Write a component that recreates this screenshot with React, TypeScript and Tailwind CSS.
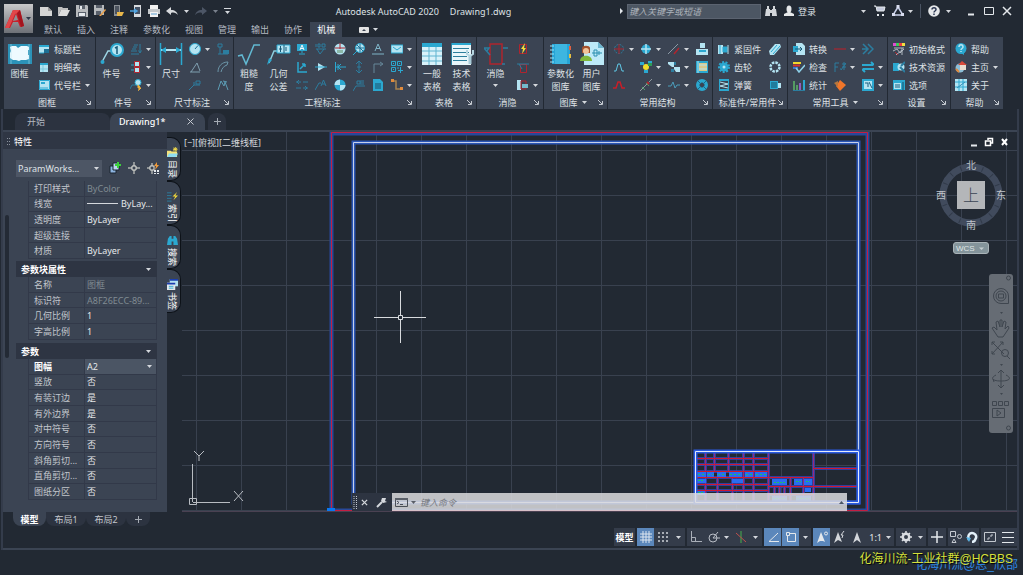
import type { ReactNode } from "react";
import clsx from "clsx";

const C = "#2ba8d0";
const L = "#b4e4f2";
const D = "#2c7d9f";
const R = "#b0242e";
const W = "#e4e8ec";

// 12 x 12 artwork for the small tool buttons
const icons: Record<string, ReactNode> = {
  titleBlock: <><rect x="1" y="2" width="10" height="8" fill={L} /><path d="M1 2h10v2H1z" fill={C} /><path d="M6 6h5v4H6z" fill="#1c6f94" /><path d="M1 10h5" stroke={C} /></>,
  partsList: <><rect x="2" y="2" width="8" height="9" fill={L} /><path d="M2 2h8v2H2z" fill={C} /><path d="M5 4v7M2 8h8" stroke="#7cc9de" /></>,
  codeBlock: <><rect x="1" y="1" width="11" height="10" fill={L} /><path d="M1.500 1.500h10v9h-10z" stroke={C} fill="none" /><path d="M3 3h4v2H3z" fill={C} /><path d="M2 9h8" stroke={C} /></>,
  balloonList: <path d="M4 2h4M3 4h4M2 6h4M1 8h6M1 11h8M10 1v8M8.500 7.500L10 10l1.500-2.500" stroke={D} fill="none" />,
  balloonSwap: <><path d="M4.500 0.500h5v5h-5zM4.500 6.500h5v5h-5z" fill={L} stroke={R} /><path d="M1 4h3M1 9h3" stroke={C} /></>,
  balloonBolt: <><path d="M0 10l2-4h4" stroke={D} fill="none" /><circle cx="8" cy="3.500" r="3" fill={L} stroke={C} /><path d="M8 6l2 2-1.500 3.500L11 9H8z" stroke="#f0b23c" fill="#f0b23c" /></>,
  radius: <><circle cx="6" cy="6" r="5.500" fill={L} stroke={C} /><path d="M6 6l3-3.500" stroke="#1c6f94" /></>,
  angle: <path d="M1 11h10M2 11L8 2l3 8" stroke="#7f9fb0" fill="none" />,
  leader: <path d="M0 11l5-5h6M7 2h4v3H7zM5 6V3" stroke={D} fill="none" />,
  ordinate: <><path d="M1 1h4v3H1zM3 4v7M1 11h10" stroke={D} fill="none" /><path d="M6 7h6v4H6z" fill={D} /></>,
  arc: <path d="M1 11C1 5 5 1 11 1M4 11C5 7 7 5 10 4L11 1" stroke="#6b95a8" fill="none" />,
  jog: <path d="M1 11L4 2l3 5 1-4 3 8M6 2l4 1" stroke="#5c9db5" fill="none" />,
  datum: <><path d="M1 1h10v7H1z" fill={C} /><path d="M4 7l2-5 2 5M4.500 5.500h3" stroke="#eefaff" fill="none" /><path d="M6 8v2M3 11h6" stroke={C} /></>,
  rough: <path d="M1 6h10M2 6l3 5 4-5M1 1v3M3 1h2v3H3zM7 1h3v3H7z" stroke={D} fill="none" />,
  weldBall: <><circle cx="6" cy="6" r="5.500" fill={L} /><path d="M1 5h10M6 0v6" stroke={R} /><path d="M3 7h6v3H3z" fill="#8bb8a8" /></>,
  target: <><circle cx="7" cy="5" r="4.500" fill={L} stroke={C} /><path d="M7 1v8M3 5h8M4 2l6 6" stroke="#1c6f94" /><path d="M4 8l-4 4" stroke={C} /></>,
  textLine: <path d="M3 8l3-7 3 7M4 5.500h4M0 11h12" stroke="#7fb4c8" fill="none" />,
  tag: <><path d="M0 2h12v8H0z" fill={L} /><path d="M0 2h12v8H0zM2 4l4 3 4-3" stroke={C} fill="none" /></>,
  corner: <path d="M2 1v10h9M4 8l5-5M9 3H6M9 3v3" stroke={C} fill="none" strokeWidth="1.500" />,
  taper: <><path d="M3 2l7 4-7 4z" fill={L} /><path d="M0 6h12" stroke={C} /></>,
  pushLeft: <path d="M1.500 1v10M4 3v6M2 6h10M4 6l3-3M4 6l3 3" stroke={C} fill="none" />,
  updown: <path d="M6 0v12M3 3l3-3 3 3M3 9l3 3 3-3M4 6h4" stroke={D} fill="none" />,
  bend: <path d="M2 12V3h8M8 1l3 2-3 2" stroke="#66879a" fill="none" />,
  qr: <path d="M.5.5h4v4h-4zM6.500.5h4v4h-4zM.5 6.500h4v4h-4zM6 7h2M9.500 6v6M7 9.500h5M2 2.500h1M8 2.500h1M2 8.500h1" stroke={C} fill="none" />,
  swapRows: <path d="M0 3h5M7 3h5M0 9h5M7 9h5M3 1L1 3l2 2M9 7l2 2-2 2" stroke={D} fill="none" />,
  leaderA: <path d="M0 11l4-7h2M6 7l2.500-6L11 7M7 5h3" stroke={D} fill="none" />,
  quad: <><circle cx="6" cy="6" r="5.500" fill={C} /><path d="M6 6V.5A5.500 5.500 0 00.5 6zM6 6v5.500A5.500 5.500 0 0011.500 6z" fill={L} /></>,
  leaderNote: <path d="M0 12l3-5h9M4 2h3v3H4zM8 1v5M10 1v5" stroke={D} fill="none" />,
  note: <><path d="M1 0h7l3 3v9H1z" fill={C} /><path d="M3 5h6M3 7h6M3 9h6" stroke="#1a4e68" /></>,
  route: <><path d="M1 2h4v8h5" stroke="#a88350" fill="none" strokeWidth="1.500" /><path d="M0 0h3v3H0zM9 8h3v3H9z" fill="#e08b3c" /></>,
  hideBolt: <><path d="M2.500 1.500h7v9h-7z" stroke={R} fill="none" /><path d="M8 0L4 6h2l-1 5 4-6H7z" fill="#f5dc3a" /></>,
  hideOff: <><path d="M3.500 3.500h6v8h-6z" stroke={R} fill="none" /><path d="M0 3h12M2 3l3 5" stroke={D} /></>,
  hideEdit: <><path d="M0 1h4v10H0z" fill={L} /><path d="M4 2h5v8H4z" stroke={R} fill="none" /><path d="M5 5h6v4H5z" fill="#76b9cc" /></>,
  holeRed: <><circle cx="6" cy="6" r="4.500" stroke={D} fill="none" strokeDasharray="2 1" /><path d="M1 6h10M6 1v10" stroke={R} /></>,
  hole: <><circle cx="6" cy="6" r="4.500" fill={C} /><path d="M1 6h10M6 1v10" stroke={L} strokeWidth="1.500" /></>,
  lines: <><path d="M0 11L10 1" stroke="#8a98a4" /><path d="M6 11l5-6" stroke={R} strokeWidth="1.500" /></>,
  keyway: <><path d="M0 6h12v6H0zM4 0h5v5H4z" fill={L} /><path d="M3 7h7v2H3z" fill={C} /></>,
  bump: <path d="M1 10h2L5 3h2l2 7h2" stroke="#5fc8e6" fill="none" />,
  bumpRed: <path d="M0 9h3L5 3h2l2 6h3" stroke="#c81e28" fill="none" strokeWidth="1.500" />,
  cluster: <><circle cx="6" cy="6" r="3" fill="#f0dc2a" /><path d="M0 1h4v3H0zM8 0h4v4H8zM4 9h4v3H4z" fill={C} /><path d="M8 2h4v3H8z" fill="#2f9a55" /></>,
  blocks: <><path d="M0 1h6v5H4L0 3zM6 6h6v5H8L6 8z" fill={L} /><path d="M6 1h2v3H6zM3 8h3v3H3z" fill={D} /></>,
  frame: <><path d="M0 0h12v12H0z" fill={C} /><path d="M3 2h8v8H3z" fill="#d9c98c" /><path d="M3 4h8M3 8h8M2 0v12" stroke={L} /></>,
  axis: <><path d="M0 12L12 0" stroke="#8e989e" /><path d="M2 8l3 3M6 4l3 3" stroke="#4aa364" /><path d="M7 3l2 2" stroke={R} strokeWidth="2" /></>,
  wave: <path d="M0 7h3l2-4 2 6 2-3h3" stroke="#4b9dbb" fill="none" />,
  ring: <><circle cx="6" cy="6" r="4.250" stroke={C} strokeWidth="3.500" fill="none" /><path d="M2 2l3 3M10 2L7 5M2 10l3-3M10 10L7 7" stroke="#1b6788" /></>,
  bolt: <><path d="M0 2h5v9H0z" fill={L} /><path d="M2 2v9M5 4h4v5H5z" stroke={C} fill={C} /><path d="M10 2v9" stroke={L} /></>,
  gear: <><circle cx="6" cy="6" r="4.500" fill={C} /><circle cx="6" cy="6" r="5" stroke={C} strokeWidth="2" strokeDasharray="2 1.500" fill="none" /><circle cx="6" cy="6" r="1.500" fill={L} /></>,
  spring: <><path d="M1 1h10M1 11h10" stroke={C} strokeWidth="2" /><path d="M2 3l8 2-8 2 8 2" stroke={L} fill="none" /><path d="M1.500 1v10M10.500 1v10" stroke={C} /></>,
  pin: <><path d="M0 8l6-7h5l1 3-7 8H1z" fill={L} /><path d="M2 9l6-7M4 11l7-8" stroke={C} /></>,
  bearing: <circle cx="6" cy="6" r="4.500" stroke={L} strokeWidth="2.500" strokeDasharray="2.500 1" fill="none" />,
  motor: <><path d="M1 2h8v8H1z" fill={C} /><path d="M2 4h6M2 6h6M2 8h6" stroke="#174f69" /><path d="M9 4h3v5H9z" fill={L} /></>,
  convert: <><path d="M3 0h6l3 3v9H3z" fill={L} /><path d="M0 3h5v6H0z" fill={C} /><path d="M2 6h7M7 4l2 2-2 2" stroke="#175a78" fill="none" /></>,
  check: <><path d="M0 2h8" stroke="#f0d62c" strokeWidth="2" /><path d="M0 4.500h7" stroke="#d23434" strokeWidth="2" /><path d="M0 7h5" stroke="#3a77d0" strokeWidth="2" /><path d="M3 7l3 4 6-7" stroke="#8fd2ea" fill="none" strokeWidth="1.500" /></>,
  stats: <><path d="M1 2v10M4 6v6" stroke="#5db86a" strokeWidth="1.500" /><path d="M7 4v8" stroke="#8e5cc0" strokeWidth="2" /><path d="M11 1v11" stroke={C} strokeWidth="2" /><path d="M0 11.500h12" stroke={D} /></>,
  redLine: <path d="M0 6h12" stroke="#c21f28" />,
  fit: <path d="M1 11V2h4M1 6h3M6 8h1M8 3h4M8 6h4M10 1v8M7 9l5-7" stroke={D} fill="none" />,
  diamond: <><path d="M6 1l6 5-6 6-4-5z" fill="#f0762a" /><path d="M0 4l4-2v6z" fill="#b7763c" /></>,
  chevrons: <path d="M1 1l5 5-5 5M6 1l5 5-5 5M0 6h5" stroke={D} fill="none" strokeWidth="1.500" />,
  swap: <path d="M0 4h11M12 8H1M9 1l3 3M3 11L0 8" stroke={C} strokeWidth="2" fill="none" />,
  catalog: <><path d="M0 0h12v12H0z" fill={C} /><path d="M2 2h8v8H2z" fill={L} /><path d="M3 4h3v4M7 3l3 6" stroke="#1a5f80" fill="none" /></>,
  initFormat: <><path d="M0 0h3v3H0z" fill="#e24bd2" /><path d="M3 0h3v3H3z" fill="#3ad05a" /><path d="M6 0h3v3H6z" fill="#f04040" /><path d="M9 0h3v3H9z" fill="#f0e040" /><path d="M1 5h10M0 8l4-2 3 4 4-4M3 12l6-5M9 5v7" stroke="#b0b8c0" fill="none" /><path d="M2 9l3 3" stroke={R} /></>,
  resource: <><path d="M0 2h6v8H0z" fill={C} /><circle cx="8" cy="6" r="3.500" fill={L} /><path d="M7 6l5 5M8 5l4-4" stroke={D} strokeWidth="2" /></>,
  options: <><path d="M0 1h12v10H0z" fill={C} /><path d="M1 4h7v6H1z" fill={L} /><path d="M2 6h5M2 8h5" stroke="#1a5f80" /><path d="M10 3v8" stroke="#174f69" /></>,
  helpBall: <><circle cx="6" cy="5.500" r="5.500" fill={C} /><path d="M6 10l3 2V9z" fill={C} /><path d="M4 4c0-3 4-3 4 0 0 1.500-2 1.500-2 3M6 8v1" stroke={L} fill="none" strokeWidth="1.500" /></>,
  home: <><circle cx="5" cy="7" r="4.500" fill="#8dbfd8" /><path d="M3 4l4-4 5 4z" fill="#d84a3a" /><path d="M5 4h6v5H5z" fill="#e8ddd0" /><path d="M1 8l3 3" stroke="#e08a3a" strokeWidth="2" /></>,
  about: <><path d="M0 0h12v12H0z" fill={L} /><path d="M0 3h12M0 8h12M4 0v12M8 0v12" stroke={C} /><path d="M2 9l8-6" stroke="#2f8fb8" /></>,
  // quick access
  qNew: <><path d="M0 2h8l4 4v5H0z" fill="#d5d5d5" /><path d="M8 2v4h4" fill="#9c9c9c" /></>,
  qOpen: <><path d="M0 2h4l1 1h5v2H3l-3 6z" fill="#bfbfbf" /><path d="M3 5h9l-3 6H0z" fill="#dedede" /></>,
  qSave: <><path d="M0 0h11l1 1v11H0z" fill="#b7babd" /><path d="M3 0h6v4H3zM2 7h8v5H2z" fill="#59606b" /><path d="M4 1h2v3H4zM3 8h6v3H3z" fill={W} /></>,
  qSaveAs: <><path d="M0 0h10v10H0z" fill="#b7babd" /><path d="M2 0h6v3H2zM2 6h5v4H2z" fill="#59606b" /><path d="M5 11l6-7 1 1-5 6z" fill="#e8a04a" /></>,
  qMobileOpen: <><path d="M2 0h6v11H2z" fill="#8c9196" /><path d="M3 1h4v8H3z" fill="#4d545f" /><path d="M5 7h7l-2 4H5z" fill="#e8b64a" /></>,
  qMobileSave: <><path d="M4 0h7v12H4z" fill="#d7dade" /><path d="M5 2h5v7H5z" fill="#435064" /><path d="M0 6h6M4 4l3 2-3 2" stroke="#4da3e0" fill="none" strokeWidth="1.500" /></>,
  qPrint: <><path d="M2 0h8v4H2z" fill="#f2f2f2" /><path d="M0 4h12v5H0z" fill="#c4c8cb" /><path d="M2 7h8v5H2z" fill="#f2f2f2" /><path d="M3 9h6" stroke="#5a9fd0" /></>,
  qUndo: <path d="M0 6l5-4v3c4 0 6 2 7 5-2-2-4-3-7-2v2z" fill="#d8dadd" />,
  qRedo: <path d="M12 6L7 2v3C3 5 1 7 0 10c2-2 4-3 7-2v2z" fill="#4d5666" />,
  find: <path d="M1 4h4v7H0zM7 4h4l1 7H7zM2 1h2v3H2zM8 1h2v3H8zM5 5h2v3H5z" fill="#d3d6da" />,
  user: <><ellipse cx="6" cy="4" rx="2.500" ry="3.500" fill="#e6e8ea" /><path d="M1 11V9l4-2h2l4 2v2z" fill="#e6e8ea" /></>,
  cart: <><path d="M0 1h2l1 5h7l1-4H3" fill="#c3c9dc" stroke={W} /><path d="M3 9h2v2H3zM8 9h2v2H8z" fill={W} /></>,
  appStore: <><path d="M6 2l5 8H1z" stroke="#c9d0ea" fill="none" strokeWidth="1.500" /><path d="M4.500 0h3v3h-3zM0 8h3v3H0zM9 8h3v3H9z" fill="#d8dcee" /></>,
  help: <><circle cx="6" cy="6" r="5.800" fill="#e6e8ea" /><path d="M4 4.500c0-2.500 4-2.500 4 0 0 1.500-2 1.500-2 3M6 8.500v1.500" stroke="#2a3550" fill="none" strokeWidth="1.500" /></>,
  winMin: <path d="M3 9.500h6" stroke={W} strokeWidth="2" />,
  winMax: <path d="M1.500 2.500h9v7h-9z" stroke={W} fill="none" />,
  winClose: <path d="M2 2l8 8M10 2l-8 8" stroke={W} strokeWidth="1.500" />,
  // palette
  pAdd: <><path d="M1 4h6v7H1z" fill="#8db4e0" stroke="#1a2530" /><path d="M4 1h6v7H4z" fill="#bcd2ee" stroke="#1a2530" /><path d="M9 0v6M6 3h6" stroke="#3bd03b" strokeWidth="2" /></>,
  pPick: <path d="M6 0v4M6 8v4M0 6h4M8 6h4M4 4h4v4H4z" stroke="#e4e4dc" fill="none" />,
  pQuick: <><path d="M5 1v3M5 8v4M0 6h3M3 4h4v4H3z" stroke="#e4e4dc" fill="none" /><path d="M10 0L7 4h2l-1 4 4-5h-2z" fill="#f09a3a" /><path d="M7 8h2v2H7zM10 8h2v2h-2zM7 11h2v1H7zM10 11h2v1h-2z" fill={W} /></>,
  vFolder: <><path d="M0 4h4l1 1h6v6H0z" fill="#f5e27a" /><path d="M2 7h10l-2 4H0z" fill="#8fdcf0" /><path d="M9 0v5M6.500 2.500h5M7 1l4 3M11 1L7 4" stroke="#f8e04a" /></>,
  vIndex: <><path d="M0 2h5M0 5h5M0 8h5M0 11h5" stroke={D} /><path d="M11 1L6 6h3l-2 4 5-5H9z" fill="#f5dc3a" /></>,
  vFind: <path d="M1 4l2-3h2v10H0zM7 1h2l2 3 1 7H7zM5 4h2v3H5z" fill={C} />,
  vBook: <><path d="M3 0h9v8H3z" fill={L} /><path d="M0 4h9v8H0z" fill={W} /><path d="M0 4h9v2H0zM3 0h9v2H3z" fill="#1b3fb0" /><path d="M2 8h5M2 10h5" stroke={C} /></>,
  // status bar, drawn on the same grid
  sGrid: <path d="M3 0v12M6 0v12M9 0v12M0 3h12M0 6h12M0 9h12" stroke="#dde6f0" />,
  sSnap: <path d="M2 1v2M6 1v2M10 1v2M2 5v2M6 5v2M10 5v2M2 9v2M6 9v2M10 9v2" stroke="#cdd1d7" strokeWidth="1.500" />,
  sOrtho: <path d="M1.500 0v10.500H12M1.500 6.500h4v4" stroke="#a9afb8" fill="none" />,
  sPolar: <><circle cx="5" cy="7" r="4" stroke="#b9bec6" fill="none" /><path d="M5 7h7M5 7l5-6" stroke="#b9bec6" /></>,
  sIso: <><path d="M6 0v12" stroke="#47b04c" /><path d="M1 2l10 9" stroke="#c0504d" /></>,
  sTrack: <path d="M11 2L2 10.500h10" stroke={W} fill="none" />,
  sOsnap: <><path d="M2.500 2.500h8v8h-8z" stroke={W} fill="none" /><path d="M1.500 1.500h3v3h-3z" stroke={W} fill="#5b87bb" /></>,
  sAnnoO: <><path d="M5 1l4 10-2-1H4l-3 2zM5 5v3" fill={W} /><circle cx="10" cy="2.500" r="1.500" stroke={W} fill="none" /></>,
  sAnnoBolt: <><path d="M5 1l4 10-4-2-4 3z" fill="#d3d6db" /><path d="M11 0L8 4h2L9 7" stroke="#d3d6db" fill="none" /></>,
  sAnno: <path d="M6 1l4 11-4-3-4 3z" fill="#d3d6db" />,
  sGear: <><circle cx="6" cy="6" r="3.250" stroke="#dadde2" strokeWidth="2.500" fill="none" /><path d="M6 0v3M6 9v3M0 6h3M9 6h3M2 2l2 2M8 8l2 2M10 2L8 4M2 10l2-2" stroke="#dadde2" strokeWidth="1.500" /></>,
  sPlus: <path d="M6 0v12M0 6h12" stroke={W} strokeWidth="1.500" />,
  sIsolate: <><path d="M.5.5h5v5h-5zM6 11.500H2L4 8z" stroke="#c4c9d0" fill="none" /><circle cx="9.500" cy="5.500" r="2" stroke="#c4c9d0" fill="none" /></>,
  sPerf: <><path d="M3 9C1 4 4 2 6 2s5 2 4 5-3 4-4 4" stroke="#e4f1fa" strokeWidth="2.500" fill="none" /><path d="M0 6l5 1-2 4z" fill="#57b4e6" /></>,
  sClean: <><path d="M.5 1.500h11v9H.5z" stroke="#c4c9d0" fill="none" /><path d="M3 8h2v-2M9 4H7v2" stroke="#c4c9d0" fill="none" /></>,
  sMenu: <path d="M0 1.500h12M0 6.500h12M0 11.500h12" stroke={W} />,
};

// 24 x 24 artwork for the large ribbon buttons
const bigIcons: Record<string, ReactNode> = {
  frame: <><path d="M0 2h24v20H0z" fill="#2c93b8" /><path d="M4 4h4l2 2 3-2h6l2 1v3h-1v5h1v4l-3 1h-5l-2 1-3-1H5l-3-2v-5l1-2-1-4z" fill="#eefaff" /><path d="M3 2v20M21 2v20" stroke={L} opacity=".5" /></>,
  balloon: <><path d="M2 20L8 9h6" stroke="#9fd7e6" fill="none" strokeWidth="1.500" /><circle cx="2.500" cy="20" r="2" fill={C} /><circle cx="17" cy="8" r="6" fill={L} stroke={C} strokeWidth="2" /><path d="M15 6l2-1v7" stroke="#145a7a" fill="none" strokeWidth="1.500" /></>,
  dim: <><path d="M1.500 1v22M22.500 1v22" stroke={C} strokeWidth="1.500" /><path d="M2 8h20" stroke={L} strokeWidth="2" /><path d="M2 8l5-3v6zM22 8l-5-3v6z" fill={C} /></>,
  surface: <path d="M1 14l4-1 4 9L17 3h6" stroke="#62b9d2" fill="none" strokeWidth="1.500" />,
  geo: <><path d="M2 21l5-12h4" stroke="#8ccfdf" fill="none" strokeWidth="1.500" /><path d="M0 23l2-7 3 2z" fill={C} /><path d="M10 3h13v8H10z" fill={L} stroke={C} /><path d="M17 3v8M12 7h3M13.500 4v6M19 5v4" stroke="#175a78" /></>,
  table: <><path d="M2 1h20v22H2z" fill="#d8f2fa" /><path d="M2 1h20v4H2z" fill={C} /><path d="M9 5v18M16 5v18M2 9h20M2 14h20M2 19h20" stroke="#5fb4d0" /></>,
  techTable: <><path d="M1 1h20v22H1z" fill="#e8f6fa" /><path d="M1 2h20" stroke={C} strokeWidth="2" /><path d="M3 6.500h16M3 10.500h16M3 14.500h14M3 18.500h14M1.500 1v22" stroke="#2b7e9c" /><path d="M20 13v9" stroke="#a8cbd8" strokeWidth="3" /><path d="M17 8v4l3 2 3-2V8" stroke="#b5d5e0" fill="none" strokeWidth="2" /></>,
  hide: <><path d="M6 2h12v20H6z" stroke={R} fill="none" strokeWidth="1.500" /><path d="M0 6h5l-2 3M24 6h-5M0 6l6 7M18 22h3" stroke={D} fill="none" strokeWidth="1.500" /></>,
  library: <><path d="M3 2h18v20H3z" fill="#27a5d6" /><path d="M6 2h12v20H6z" fill="#3db6e0" /><path d="M1 4h4M1 8h4M1 12h4M1 16h4M1 20h4" stroke="#9ce4f8" /><path d="M21 4v4" stroke="#e06040" strokeWidth="2" /><path d="M21 12v4" stroke="#e8c040" strokeWidth="2" /></>,
  userLib: <><path d="M4 0h14l6 6v17H4z" fill="#bdeaf8" /><path d="M18 0v6h6" fill="#6cb6d0" /><path d="M12 11h10M14 8h3v6h-3zM19 9v4" stroke="#2b8fb0" fill="none" /><path d="M2 6c0-3 8-3 8 0v5H2z" fill="#a3522c" /><circle cx="6" cy="9" r="3" fill="#f0c49a" /><path d="M0 19c0-7 12-7 12 0z" fill="#7fb83c" /></>,
};

function Icon({ name, className = "size-3" }: { name: string; className?: string }) {
  return (
    <svg viewBox="0 0 12 12" className={clsx("shrink-0", className)} aria-hidden="true">
      {icons[name]}
    </svg>
  );
}

function Caret({ className = "text-[#d5d8dd]" }: { className?: string }) {
  return (
    <svg viewBox="0 0 5 3" className={clsx("h-[3px] w-[5px] shrink-0", className)} aria-hidden="true">
      <path d="M0 0h5L2.500 3z" fill="currentColor" />
    </svg>
  );
}

type ToolDef = { icon: string; label?: string; caret?: boolean };

function Tools({ items, className }: { items: ToolDef[]; className: string }) {
  return (
    <div className={clsx("flex shrink-0 flex-col", className)}>
      {items.map((t) => (
        <button key={t.icon} type="button" aria-label={t.label ?? t.icon} className="flex h-[18px] items-center gap-1 pl-[3px]">
          <Icon name={t.icon} />
          {t.label && <span className="whitespace-nowrap">{t.label}</span>}
          {t.caret && <Caret />}
        </button>
      ))}
    </div>
  );
}

function Big({ icon, lines, caret, className }: { icon: string; lines: string[]; caret?: boolean; className: string }) {
  return (
    <button type="button" className={clsx("flex shrink-0 flex-col items-center pt-[2px]", className)}>
      <svg viewBox="0 0 24 24" className="size-6" aria-hidden="true">
        {bigIcons[icon]}
      </svg>
      <span className="flex flex-col pt-px leading-[13px] whitespace-nowrap">
        {lines.map((l) => (
          <span key={l}>{l}</span>
        ))}
      </span>
      {caret && <Caret className="mt-1 text-[#d5d8dd]" />}
    </button>
  );
}

function Panel({ title, className, titleCaret, children }: { title: string; className: string; titleCaret?: boolean; children: ReactNode }) {
  return (
    <section className={clsx("flex shrink-0 flex-col bg-[#3b4453] pt-[3px]", className)}>
      <div className="flex h-[54px]">{children}</div>
      <div className="flex h-[15px] items-center pt-[2px]">
        <span className="flex flex-1 items-center justify-center gap-1 pl-1 whitespace-nowrap">
          {title}
          {titleCaret && <Caret />}
        </span>
        <svg viewBox="0 0 5 5" className="mr-1 size-[5px]" aria-hidden="true">
          <path d="M0 0l4 4M4.500 1v3.500H1" stroke="#c5cad1" fill="none" />
        </svg>
      </div>
    </section>
  );
}

const menuTabs = ["默认", "插入", "注释", "参数化", "视图", "管理", "输出", "协作", "机械"];
const quick = ["qNew", "qOpen", "qSave", "qSaveAs", "qMobileOpen", "qMobileSave", "qPrint", "qUndo"];

function TitleBar() {
  return (
    <header className="flex">
      <button type="button" aria-label="应用程序菜单" className="mt-1 ml-1 flex h-[29px] w-[29px] shrink-0 items-center bg-linear-to-b from-[#c9c9cb] to-[#6d7076]">
        <svg viewBox="0 0 22 22" className="size-[22px]" aria-hidden="true">
          <path d="M1 20L9 2h7l4 16-4 1-2-5H9l-3 6z" fill="#c8202a" />
          <path d="M9 2h7l-2 3-3 1-6 14H1z" fill="#e2474a" />
          <path d="M12 6l2 6-5 1z" fill="#8e9094" />
          <path d="M16 2l4 16-3 1-4-14z" fill="#a3141e" />
        </svg>
        <Caret className="text-[#30384a]" />
      </button>
      <div className="min-w-0 flex-1">
        <div className="flex h-[22px] items-center">
          <div className="flex items-center gap-[6px] pl-[7px]">
            {quick.map((q) => (
              <button key={q} type="button" aria-label={q}>
                <Icon name={q} />
              </button>
            ))}
            <Caret />
            <button type="button" aria-label="qRedo">
              <Icon name="qRedo" />
            </button>
            <Caret className="text-[#7a818d]" />
            <svg viewBox="0 0 7 6" className="h-[6px] w-[7px]" aria-hidden="true">
              <path d="M0 0h7v1H0zM1 3h5L3.500 6z" fill="#d5d8dd" />
            </svg>
          </div>
          <h1 className="flex flex-1 justify-center gap-[11px] pr-1 whitespace-nowrap text-[#dfe2e6]">
            <span>Autodesk AutoCAD 2020</span>
            <span>Drawing1.dwg</span>
          </h1>
          <svg viewBox="0 0 3 6" className="mr-1 h-[6px] w-[3px]" aria-hidden="true">
            <path d="M0 0v6l3-3z" fill="#e4e8ec" />
          </svg>
          <input
            aria-label="搜索"
            placeholder="键入关键字或短语"
            className="h-[15px] w-[134px] border border-[#5b6370] bg-[#4c5663] px-px italic placeholder:text-[#aeb4bc]"
          />
          <div className="flex items-center pl-1">
            <Icon name="find" />
            <button type="button" className="ml-[6px] flex w-[83px] items-center gap-[3px]">
              <Icon name="user" />
              登录
              <Caret className="ml-auto text-[#d5d8dd]" />
            </button>
            <Icon name="cart" className="ml-2 size-3" />
            <Icon name="appStore" className="mr-1 ml-[6px] size-3" />
            <Caret />
            <span className="mx-[7px] h-[14px] w-px bg-[#4a5362]" />
            <Icon name="help" className="mr-[6px] size-3" />
            <Caret />
            <button type="button" aria-label="最小化" className="ml-[14px]">
              <Icon name="winMin" />
            </button>
            <button type="button" aria-label="最大化" className="ml-[6px]">
              <Icon name="winMax" />
            </button>
            <button type="button" aria-label="关闭" className="mr-[10px] ml-[6px]">
              <Icon name="winClose" />
            </button>
          </div>
        </div>
        <nav className="flex h-[15px] items-center gap-px pl-1">
          {menuTabs.map((t, i) => (
            <button
              key={t}
              type="button"
              className={clsx("h-[15px] px-[7px]", i === menuTabs.length - 1 ? "bg-[#3b4453] text-white" : "text-[#b4b9c1]")}
            >
              {t}
            </button>
          ))}
          <svg viewBox="0 0 10 6" className="ml-4 h-[6px] w-[10px]" aria-hidden="true">
            <rect width="10" height="6" rx="1" fill="#e4e4e4" />
            <path d="M3 4h4L5 2z" fill="#3b4453" />
          </svg>
          <Caret className="ml-[3px] text-[#d5d8dd]" />
        </nav>
      </div>
    </header>
  );
}

function Ribbon() {
  return (
    <div className="flex gap-px overflow-hidden pl-1">
      <Panel title="图框" className="w-[91px]">
        <Big icon="frame" lines={["图框"]} className="w-[31px]" />
        <Tools className="w-[60px]" items={[{ icon: "titleBlock", label: "标题栏" }, { icon: "partsList", label: "明细表" }, { icon: "codeBlock", label: "代号栏", caret: true }]} />
      </Panel>
      <Panel title="件号" className="w-[59px]">
        <Big icon="balloon" lines={["件号"]} className="w-[31px]" />
        <Tools className="w-[28px]" items={[{ icon: "balloonList", caret: true }, { icon: "balloonSwap", caret: true }, { icon: "balloonBolt", caret: true }]} />
      </Panel>
      <Panel title="尺寸标注" className="w-[77px]">
        <Big icon="dim" lines={["尺寸"]} className="w-[30px]" />
        <Tools className="w-[28px]" items={[{ icon: "radius", caret: true }, { icon: "angle" }, { icon: "leader" }]} />
        <Tools className="w-[19px]" items={[{ icon: "ordinate" }, { icon: "arc" }, { icon: "jog" }]} />
      </Panel>
      <Panel title="工程标注" className="w-[182px]">
        <Big icon="surface" lines={["粗糙", "度"]} className="w-[30px] text-center" />
        <Big icon="geo" lines={["几何", "公差"]} className="w-[29px]" />
        <Tools className="w-[19px]" items={[{ icon: "datum" }, { icon: "corner" }, { icon: "swapRows" }]} />
        <Tools className="w-[19px]" items={[{ icon: "rough" }, { icon: "taper" }, { icon: "leaderA" }]} />
        <Tools className="w-[19px]" items={[{ icon: "weldBall" }, { icon: "pushLeft" }, { icon: "quad" }]} />
        <Tools className="w-[19px]" items={[{ icon: "target" }, { icon: "updown" }, { icon: "leaderNote" }]} />
        <Tools className="w-[19px]" items={[{ icon: "textLine" }, { icon: "bend" }, { icon: "note" }]} />
        <Tools className="w-[28px]" items={[{ icon: "tag", caret: true }, { icon: "qr", caret: true }, { icon: "route", caret: true }]} />
      </Panel>
      <Panel title="表格" className="w-[59px]">
        <Big icon="table" lines={["一般", "表格"]} className="w-[30px]" />
        <Big icon="techTable" lines={["技术", "表格"]} className="w-[29px]" />
      </Panel>
      <Panel title="消隐" className="w-[66px]">
        <Big icon="hide" lines={["消隐"]} caret className="w-[37px]" />
        <Tools className="w-[28px]" items={[{ icon: "hideBolt" }, { icon: "hideOff" }, { icon: "hideEdit", caret: true }]} />
      </Panel>
      <Panel title="图库" titleCaret className="w-[63px]">
        <Big icon="library" lines={["参数化", "图库"]} className="w-[33px] text-center" />
        <Big icon="userLib" lines={["用户", "图库"]} className="w-[29px]" />
      </Panel>
      <Panel title="常用结构" className="w-[104px]">
        <Tools className="ml-[2px] w-[27px]" items={[{ icon: "holeRed", caret: true }, { icon: "bump" }, { icon: "bumpRed" }]} />
        <Tools className="w-[28px]" items={[{ icon: "hole", caret: true }, { icon: "cluster", caret: true }, { icon: "axis", caret: true }]} />
        <Tools className="w-[28px]" items={[{ icon: "lines", caret: true }, { icon: "blocks", caret: true }, { icon: "wave", caret: true }]} />
        <Tools className="w-[19px]" items={[{ icon: "keyway" }, { icon: "frame" }, { icon: "ring" }]} />
      </Panel>
      <Panel title="标准件/常用件" className="w-[74px]">
        <Tools className="ml-[2px] w-[51px]" items={[{ icon: "bolt", label: "紧固件" }, { icon: "gear", label: "齿轮" }, { icon: "spring", label: "弹簧" }]} />
        <Tools className="w-[19px]" items={[{ icon: "pin" }, { icon: "bearing" }, { icon: "motor" }]} />
      </Panel>
      <Panel title="常用工具" titleCaret className="w-[99px]">
        <Tools className="ml-[2px] w-[41px]" items={[{ icon: "convert", label: "转换" }, { icon: "check", label: "检查" }, { icon: "stats", label: "统计" }]} />
        <Tools className="w-[28px]" items={[{ icon: "redLine", caret: true }, { icon: "fit", caret: true }, { icon: "diamond" }]} />
        <Tools className="w-[28px]" items={[{ icon: "chevrons" }, { icon: "swap", caret: true }, { icon: "catalog", caret: true }]} />
      </Panel>
      <Panel title="设置" className="w-[62px]">
        <Tools className="ml-[2px]" items={[{ icon: "initFormat", label: "初始格式" }, { icon: "resource", label: "技术资源" }, { icon: "options", label: "选项" }]} />
      </Panel>
      <Panel title="帮助" className="w-[52px]">
        <Tools items={[{ icon: "helpBall", label: "帮助" }, { icon: "home", label: "主页", caret: true }, { icon: "about", label: "关于" }]} className="ml-px w-[50px]" />
      </Panel>
    </div>
  );
}

type Row = [label: string, value: string, tone?: "dim" | "line" | "select"];

const general: Row[] = [
  ["打印样式", "ByColor", "dim"],
  ["线宽", "ByLay...", "line"],
  ["透明度", "ByLayer"],
  ["超级连接", ""],
  ["材质", "ByLayer"],
];
const blockProps: Row[] = [
  ["名称", "图框", "dim"],
  ["标识符", "A8F26ECC-89...", "dim"],
  ["几何比例", "1"],
  ["字高比例", "1"],
];
const params: Row[] = [
  ["图幅", "A2", "select"],
  ["竖放", "否"],
  ["有装订边", "是"],
  ["有外边界", "是"],
  ["对中符号", "否"],
  ["方向符号", "否"],
  ["斜角剪切...", "否"],
  ["直角剪切...", "否"],
  ["图纸分区", "否"],
];

function PropTable({ rows, className }: { rows: Row[]; className: string }) {
  return (
    <table className={clsx("ml-3 w-[129px] table-fixed border-collapse leading-[13px]", className)}>
      <tbody>
        {rows.map(([label, value, tone]) => (
          <tr key={label} className="border-b border-[#323949]">
            <th scope="row" className={clsx("w-[56px] border-x border-[#323949] p-0 pl-[5px] text-left whitespace-nowrap", tone === "select" ? "font-bold text-white" : "font-normal text-[#c3c7cd]")}>
              {label}
            </th>
            <td className={clsx("border-r border-[#323949] p-0 pl-[2px] whitespace-nowrap", tone === "dim" ? "text-[#808b92]" : "text-[#e6e8ea]", tone === "select" && "bg-[#4b5564]")}>
              {tone === "select" ? (
                <div className="flex items-center pr-1">
                  <select aria-label={label} className="h-[13px] min-w-0 flex-1 appearance-none">
                    <option>{value}</option>
                  </select>
                  <Caret />
                </div>
              ) : tone === "line" ? (
                <span className="flex items-center gap-[3px]">
                  <span className="h-px w-[31px] bg-[#d5d8dd]" />
                  {value}
                </span>
              ) : (
                value
              )}
            </td>
          </tr>
        ))}
      </tbody>
    </table>
  );
}

function SectionHead({ title }: { title: string }) {
  return (
    <h2 className="flex h-4 items-center justify-between bg-[#2e3543] pr-[6px] pl-[5px] font-bold text-white">
      {title}
      <Caret />
    </h2>
  );
}

function Palette() {
  return (
    <aside className="flex w-[164px] shrink-0 flex-col bg-[#3b4453]">
      <h2 className="flex h-[17px] items-center gap-1 bg-[#2f3644] pt-px pl-1 text-white">
        <svg viewBox="0 0 3 7" className="h-[7px] w-[3px]" aria-hidden="true">
          <path d="M0 .5h3M0 3.500h3M0 6.500h3" stroke="#8a919c" strokeDasharray="1 1" />
        </svg>
        特性
      </h2>
      <div className="flex h-8 items-center gap-[7px] pt-[6px] pl-[13px]">
        <div className="flex h-[17px] w-[86px] items-center bg-[#4d5665] pr-[3px]">
          <select aria-label="对象" className="min-w-0 flex-1 appearance-none pl-[2px]">
            <option>ParamWorks...</option>
          </select>
          <Caret />
        </div>
        <button type="button" aria-label="pAdd"><Icon name="pAdd" /></button>
        <button type="button" aria-label="pPick"><Icon name="pPick" /></button>
        <button type="button" aria-label="pQuick"><Icon name="pQuick" /></button>
      </div>
      <div className="flex">
        <div className="w-[13px] shrink-0 pt-[34px]">
          <div className="ml-[2px] h-[143px] w-1 rounded-full bg-[#232a35]" />
        </div>
        <div className="w-[141px]">
          <PropTable rows={general} className="h-[78px]" />
          <div className="mt-[2px]">
            <SectionHead title="参数块属性" />
          </div>
          <PropTable rows={blockProps} className="h-[63px]" />
          <div className="mt-[3px]">
            <SectionHead title="参数" />
          </div>
          <PropTable rows={params} className="h-[141px]" />
        </div>
      </div>
    </aside>
  );
}

const sideTabs = [
  { label: "目录", icon: "vFolder" },
  { label: "索引", icon: "vIndex" },
  { label: "搜索", icon: "vFind" },
  { label: "书签", icon: "vBook" },
];

function SideTabs() {
  return (
    <div className="flex w-[15px] shrink-0 flex-col pt-[5px]">
      {sideTabs.map((t) => (
        <button
          key={t.label}
          type="button"
          className="flex h-11 w-[14px] flex-col items-center rounded-r-[10px] border border-l-0 border-[#0d1218] bg-[#3b4453] pt-[9px] pr-[2px] text-white"
        >
          <Icon name={t.icon} className="size-[11px]" />
          <span className="pt-[2px] leading-[11px] [text-orientation:sideways] [writing-mode:vertical-rl]">{t.label}</span>
        </button>
      ))}
    </div>
  );
}

const textBars = [[697, 9], [707, 7], [717, 9], [729, 13], [745, 8], [755, 12]];

function Drawing() {
  return (
    <svg className="absolute inset-0 size-full" aria-hidden="true">
      <defs>
        <pattern id="grid" width="45" height="45" x="14" y="18" patternUnits="userSpaceOnUse">
          <path d="M0 .5h45M.5 0v45" stroke="#39414f" />
        </pattern>
      </defs>
      <rect width="100%" height="100%" fill="url(#grid)" />
      <g transform="translate(-182 -132)" fill="none">
        {/* paper edge */}
        <path d="M331.500 510.500v-377h536v377z" stroke="#28499a" strokeWidth="4" />
        <path d="M331.500 510.500v-378h536v378z" stroke="#c41e42" />
        {/* border */}
        <path d="M353.500 142.500h505v360h-505z" stroke="#2a55b4" strokeWidth="4" />
        <path d="M353.500 142.500h505v360h-505z" stroke="#c6d0ea" strokeWidth="1" />
        {/* title block */}
        <path d="M705.500 452v51M714.500 452v20M728.500 452v20M743.500 452v51M753.500 452v51M768.500 452v51M717.500 478v25M732.500 478v25M813.500 452v51M774.500 487v16M779.500 487v16M784.500 487v16M803.500 478v25M790.500 478v25M696 458.500h72M696 464.500h72M696 471.500h72M696 477.500h117M696 484.500h72M696 490.500h72M768 486.500h90M813 468.500h45M768 494.500h45" stroke="#3444b8" strokeWidth="3" opacity=".8" />
        <path d="M705.500 452v51M714.500 452v20M728.500 452v20M743.500 452v51M753.500 452v51M768.500 452v51M717.500 478v25M732.500 478v25M813.500 452v51M774.500 487v16M779.500 487v16M784.500 487v16M803.500 478v25M790.500 478v25" stroke="#9a2a78" />
        <path d="M696 458.500h72M696 464.500h72M696 471.500h72M696 477.500h117M696 484.500h72M696 490.500h72M768 486.500h90M813 468.500h45M768 494.500h45" stroke="#d01830" />
        {textBars.map(([x, w]) => (
          <g key={x}>
            <rect x={x} y="472" width={w} height="5" fill="#2a6cf0" />
            <path d={`M${x + 1} 474.500h${w - 2}`} stroke="#20c060" strokeDasharray="2 2" />
          </g>
        ))}
        <path d="M697 479h9v4h-9zM732 479h11v4h-11zM772 479h15v6h-15zM794 479h8v6h-8zM804 479h8v6h-8zM805 488h6v4h-6zM697 491h8v4h-8zM772 496h15v6h-15zM796 496h15v6h-15z" fill="#2a6cf0" />
        <path d="M698 480.500h6M774 482.500h12M796 481.500h5M806 481.500h4M698 492.500h6M773 498.500h13M797 498.500h13" stroke="#20c060" strokeDasharray="2 1" />
        <path d="M695.500 451.500h163v51h-163z" stroke="#2a5ae0" strokeWidth="4" />
        <path d="M695.500 451.500h163v51h-163z" stroke="#e6ebf8" />
        <path d="M327 508h8v4h-8z" fill="#0a78f0" />
        {/* crosshair */}
        <path d="M400.500 291v24M400.500 320v23M374 317.500h24M403 317.500h23M398.500 315.500h4v4h-4z" stroke="#d8dade" />
        {/* ucs icon */}
        <path d="M192.500 464v38M193 502.500h37M189.500 498.500h7v6h-7zM194 451l5 5 5-5M199 456v5M234 491l9 10M243 491l-9 10" stroke="#b8bcc2" />
      </g>
    </svg>
  );
}

function ViewCube() {
  return (
    <svg viewBox="0 0 76 76" className="absolute top-[25px] right-2 size-[76px]" aria-label="ViewCube">
      <circle cx="38" cy="38" r="28" stroke="#414b5d" strokeWidth="7" fill="none" />
      <circle cx="38" cy="38" r="28" stroke="#323b4a" strokeWidth="5" strokeDasharray="1 10" fill="none" />
      <rect x="24" y="24" width="28" height="28" fill="#b4b6b9" />
      <g fill="#c0c4ca" fontSize="10" textAnchor="middle">
        <text x="38" y="12">北</text>
        <text x="38" y="72">南</text>
        <text x="8" y="42">西</text>
        <text x="68" y="42">东</text>
        <text x="38" y="44" fontSize="16" fill="#3b4453" fontWeight="300">上</text>
      </g>
    </svg>
  );
}

function NavBar() {
  return (
    <svg viewBox="0 0 24 159" className="absolute top-[142px] right-1 h-[159px] w-6" aria-hidden="true">
      <rect width="24" height="159" rx="3" fill="#666c74" />
      <g stroke="#3f464f" fill="none">
        <circle cx="19.500" cy="4" r="2" />
        <circle cx="19.500" cy="154" r="2" />
        <path d="M19.500 22A7.500 7.500 0 1012 29.500h7.500z" />
        <circle cx="12" cy="22" r="5" />
        <path d="M9.500 20h5v4h-5z" />
        <path d="M7 60l-4-6 2-1 3 3-1-8 2-1 2 6V46h2v7l2-6 2 1-1 7 3-3 1 2-4 6-2 3H9z" />
        <path d="M3 68l12 12M14 68L3 80M3 71v-3h3M11 68h3v3M3 77v3h3" />
        <circle cx="16" cy="79" r="3.500" />
        <path d="M18 82l3 3M12 96v18M9 99l3-3 3 3M9 111l3 3 3-3M7 101c-6 3-4 6 5 6s11-3 5-6M5 108l-1-3" />
        <path d="M3.500 127.500h4v4h-4zM9.500 127.500h4v4h-4zM15.500 127.500h4v4h-4zM3.500 134.500h12v9h-12zM8 136l4 3-4 3z" />
      </g>
      <path d="M11 38h3l-1.500 2zM11 90h3l-1.500 2zM11 119h3l-1.500 2z" fill="#3f464f" />
    </svg>
  );
}

function Canvas() {
  return (
    <main className="relative min-w-0 flex-1 overflow-hidden border-b border-[#4a4152]">
      <Drawing />
      <div className="absolute top-1 left-[2px] text-[#d5d8dd]">[−][俯视][二维线框]</div>
      <div className="absolute top-1 right-[7px] flex gap-[3px]">
        <Icon name="winMin" />
        <svg viewBox="0 0 12 12" className="size-3" aria-hidden="true">
          <path d="M2.500 5h5v4.500h-5zM5 4V2.500h4.500V7H8" stroke="#fff" fill="none" strokeWidth="1.500" />
        </svg>
        <svg viewBox="0 0 12 12" className="size-3" aria-hidden="true">
          <path d="M4 3l5 6M9 3L4 9" stroke="#fff" strokeWidth="2" />
        </svg>
      </div>
      <ViewCube />
      <button type="button" className="absolute top-[110px] right-7 flex h-3 w-9 items-center gap-1 rounded-[3px] border border-[#a9b3b8] bg-[#84949b] pl-[2px] font-['Liberation_Sans',sans-serif] text-[8px] text-[#dfe4e6]">
        WCS
        <svg viewBox="0 0 5 3" className="h-[3px] w-[5px]" aria-hidden="true">
          <path d="M0 .5h5L2.500 3z" fill="#c5ced2" />
        </svg>
      </button>
      <NavBar />
      {/* command line */}
      <div className="absolute right-[170px] bottom-0 left-[170px] flex h-[18px]">
        <div className="flex w-10 items-center gap-1 bg-[#2d3441] pl-px">
          <svg viewBox="0 0 4 13" className="h-[13px] w-1" aria-hidden="true">
            <path d="M1 0v13M3.500 0v13" stroke="#c5cad1" strokeDasharray="1 1" />
          </svg>
          <svg viewBox="0 0 8 8" className="size-[7px]" aria-hidden="true">
            <path d="M1 1l6 6M7 1L1 7" stroke="#d5d8dd" strokeWidth="1.500" />
          </svg>
          <svg viewBox="0 0 12 12" className="ml-1 size-3" aria-hidden="true">
            <path d="M1 11l5-5" stroke="#d5d8dd" strokeWidth="2" />
            <path d="M6 2l-1 3 2 2 4-1-2-1 1-3z" fill="#d5d8dd" />
          </svg>
        </div>
        <div className="flex min-w-0 flex-1 items-center bg-[#dcdcde]/85 px-[3px]">
          <svg viewBox="0 0 13 9" className="h-[9px] w-[13px]" aria-hidden="true">
            <path d="M.5.5h12v8H.5zM2 3l2 1.500L2 6M5 6.500h3" stroke="#4a4f58" fill="none" />
            <path d="M0 0h13v2H0z" fill="#5a5f68" />
          </svg>
          <Caret className="ml-[3px] text-[#5a5f68]" />
          <input aria-label="命令" placeholder="键入命令" className="ml-1 h-4 min-w-0 flex-1 italic placeholder:text-[#75787e]" />
          <svg viewBox="0 0 5 3" className="h-[3px] w-[5px]" aria-hidden="true">
            <path d="M0 3h5L2.500 0z" fill="#4a5566" />
          </svg>
        </div>
      </div>
    </main>
  );
}

function StatusGroup({ children, className }: { children: ReactNode; className?: string }) {
  return <div className={clsx("flex h-[18px] items-center bg-[#343c4a]", className)}>{children}</div>;
}

function StatusButton({ icon, on, className = "w-5" }: { icon: string; on?: boolean; className?: string }) {
  return (
    <button type="button" aria-label={icon} aria-pressed={!!on} className={clsx("flex h-[18px] items-center justify-center", className, on && "bg-[#5b87bb]")}>
      <Icon name={icon} className="size-3" />
    </button>
  );
}

function StatusBar() {
  return (
    <footer className="flex justify-end gap-[2px] border-b-2 border-[#3b4453] pt-[2px] pb-[2px]">
      <StatusGroup>
        <button type="button" className="w-[21px] font-bold text-white">模型</button>
      </StatusGroup>
      <StatusGroup>
        <StatusButton icon="sGrid" on className="w-[17px]" />
        <StatusButton icon="sSnap" className="w-[18px]" />
        <Caret className="mr-1 ml-1 text-[#d5d8dd]" />
      </StatusGroup>
      <StatusGroup>
        <StatusButton icon="sOrtho" className="w-[17px]" />
        <StatusButton icon="sPolar" />
        <Caret />
        <StatusButton icon="sIso" className="w-6" />
        <Caret className="mr-1 text-[#d5d8dd]" />
      </StatusGroup>
      <StatusGroup className="gap-px">
        <StatusButton icon="sTrack" on className="w-[17px]" />
        <StatusButton icon="sOsnap" on className="w-[17px]" />
        <Caret className="mx-[3px] text-[#d5d8dd]" />
      </StatusGroup>
      <StatusGroup>
        <StatusButton icon="sAnnoO" on className="w-[17px]" />
        <StatusButton icon="sAnnoBolt" className="w-[18px]" />
        <StatusButton icon="sAnno" className="w-[18px]" />
        <button type="button" className="flex w-7 items-center justify-end gap-1 pr-[3px] text-[#e6e8ea]">
          1:1
          <Caret />
        </button>
      </StatusGroup>
      <StatusGroup>
        <StatusButton icon="sGear" className="w-[19px]" />
        <Caret className="mx-[3px] text-[#d5d8dd]" />
      </StatusGroup>
      <StatusGroup>
        <StatusButton icon="sPlus" className="w-[18px]" />
      </StatusGroup>
      <StatusGroup>
        <StatusButton icon="sIsolate" className="w-4" />
        <StatusButton icon="sPerf" className="w-[15px]" />
      </StatusGroup>
      <StatusGroup>
        <StatusButton icon="sClean" className="w-[18px]" />
        <StatusButton icon="sMenu" className="w-[18px]" />
      </StatusGroup>
    </footer>
  );
}

export default function App() {
  return (
    <div className="flex min-h-screen flex-col overflow-hidden bg-[#222933] font-['Noto_Sans','Noto_Sans_CJK_SC',sans-serif] text-[9px] leading-[13px] text-[#dfe2e6]">
      <TitleBar />
      <Ribbon />
      <div className="mr-1 ml-px flex flex-1 flex-col border-x-2 border-[#343c4b]">
        <nav className="mt-1 flex h-[17px] items-center pl-3">
          <button type="button" className="h-[17px] w-[95px] rounded-t-lg bg-[#2c3340] pl-3 text-left text-[#b4b9c1]">开始</button>
          <div className="flex h-[17px] w-[95px] items-center justify-between rounded-t-lg bg-[#3b4453] pr-[11px] pl-[9px] font-medium text-white">
            Drawing1*
            <button type="button" aria-label="关闭 Drawing1">
              <svg viewBox="0 0 7 7" className="size-[7px]" aria-hidden="true">
                <path d="M.5.5l6 6M6.500.5l-6 6" stroke="#c5cad1" />
              </svg>
            </button>
          </div>
          <button type="button" aria-label="新图形" className="ml-[3px] flex h-[17px] w-[18px] items-center justify-center rounded-t-lg bg-[#2c3340]">
            <svg viewBox="0 0 7 7" className="size-[7px]" aria-hidden="true">
              <path d="M3.500 0v7M0 3.500h7" stroke="#a5abb4" />
            </svg>
          </button>
        </nav>
        <div className="h-[2px] bg-[#3b4453]" />
        <div className="flex flex-1">
          <Palette />
          <SideTabs />
          <Canvas />
        </div>
        <nav className="flex h-[14px] items-center pl-[10px]">
          <button type="button" className="h-[14px] w-[33px] rounded-b-lg bg-[#3b4453] font-bold text-white">模型</button>
          <button type="button" className="h-[14px] w-10 rounded-b-lg bg-[#2c3340] text-[#c3c7cd]">布局1</button>
          <button type="button" className="h-[14px] w-10 rounded-b-lg bg-[#2c3340] text-[#c3c7cd]">布局2</button>
          <button type="button" aria-label="新建布局" className="flex h-[14px] w-6 items-center justify-center rounded-b-lg bg-[#2c3340]">
            <svg viewBox="0 0 7 7" className="size-[7px]" aria-hidden="true">
              <path d="M3.500 0v7M0 3.500h7" stroke="#a5abb4" />
            </svg>
          </button>
        </nav>
        <StatusBar />
      </div>
      <div className="relative h-[25px] font-['Liberation_Sans','Noto_Sans_CJK_SC',sans-serif] text-[12px] leading-[16px] whitespace-nowrap">
        <span className="absolute right-[5px] bottom-[2px] text-[#2f86e0]">化海川流@总_欣部</span>
        <span className="absolute right-[10px] bottom-2 text-[#d6e03c] [text-shadow:1px_1px_1px_#000]">化海川流-工业社群@HCBBS</span>
      </div>
    </div>
  );
}
